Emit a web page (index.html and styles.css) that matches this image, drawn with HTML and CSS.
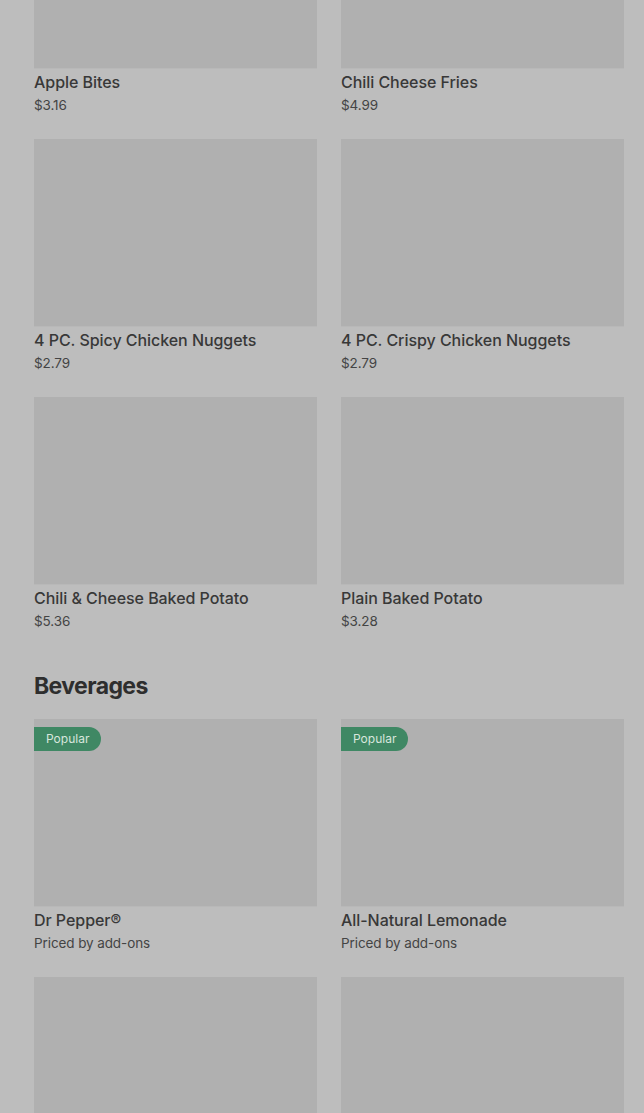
FILE: index.html
```html
<!DOCTYPE html>
<html lang="en">
<head>
    <meta charset="UTF-8">
    <meta name="viewport" content="width=device-width, initial-scale=1.0">
    <title>Menu</title>
    <link rel="stylesheet" href="styles.css">
</head>
<body>
    <main class="menu">
        <section class="menu-section first">
            <div class="item-grid">
                <div class="item">
                    <div class="item-img"></div>
                    <h3 class="item-name">Apple Bites</h3>
                    <p class="item-price">$3.16</p>
                </div>
                <div class="item">
                    <div class="item-img"></div>
                    <h3 class="item-name">Chili Cheese Fries</h3>
                    <p class="item-price">$4.99</p>
                </div>
                <div class="item">
                    <div class="item-img"></div>
                    <h3 class="item-name">4 PC. Spicy Chicken Nuggets</h3>
                    <p class="item-price">$2.79</p>
                </div>
                <div class="item">
                    <div class="item-img"></div>
                    <h3 class="item-name">4 PC. Crispy Chicken Nuggets</h3>
                    <p class="item-price">$2.79</p>
                </div>
                <div class="item">
                    <div class="item-img"></div>
                    <h3 class="item-name">Chili &amp; Cheese Baked Potato</h3>
                    <p class="item-price">$5.36</p>
                </div>
                <div class="item">
                    <div class="item-img"></div>
                    <h3 class="item-name">Plain Baked Potato</h3>
                    <p class="item-price">$3.28</p>
                </div>
            </div>
        </section>

        <section class="menu-section">
            <h2 class="section-title">Beverages</h2>
            <div class="item-grid">
                <div class="item">
                    <div class="item-img">
                        <span class="badge">Popular</span>
                    </div>
                    <h3 class="item-name">Dr Pepper®</h3>
                    <p class="item-price">Priced by add-ons</p>
                </div>
                <div class="item">
                    <div class="item-img">
                        <span class="badge">Popular</span>
                    </div>
                    <h3 class="item-name">All-Natural Lemonade</h3>
                    <p class="item-price">Priced by add-ons</p>
                </div>
                <div class="item">
                    <div class="item-img"></div>
                </div>
                <div class="item">
                    <div class="item-img"></div>
                </div>
            </div>
        </section>
    </main>
</body>
</html>
```

FILE: styles.css
```css
body {
  margin: 0;
  background: #bdbdbd;
  font-family: Inter, "Liberation Sans", sans-serif;
  color: #333;
  overflow: hidden;
}

.menu {
  padding: 0 20px 0 34px;
}

.menu-section.first {
  margin-top: -119px;
}

.menu-section {
  margin-bottom: 38px;
}

.section-title {
  margin: 0 0 17px;
  font-size: 23px;
  line-height: 32px;
  font-weight: 700;
  letter-spacing: -0.6px;
  color: #2e2e2e;
}

.item-grid {
  display: grid;
  grid-template-columns: 1fr 1fr;
  column-gap: 24px;
  row-gap: 23px;
}

.item-img {
  position: relative;
  height: 187px;
  background: #b0b0b0;
  border-bottom: 1px solid #b8b8b8;
}

.item-name {
  margin: 1px 0 0;
  font-size: 16px;
  line-height: 24px;
  font-weight: 500;
  letter-spacing: -0.05px;
  color: #383838;
}

.item-price {
  margin: 0;
  font-size: 13.5px;
  line-height: 22px;
  letter-spacing: -0.1px;
  color: #444;
}

.badge {
  position: absolute;
  top: 8px;
  left: 0;
  height: 24px;
  line-height: 24px;
  padding: 0 12px;
  background: #3f8864;
  color: #d8e6dd;
  font-size: 12px;
  border-radius: 0 12px 12px 0;
}
```
